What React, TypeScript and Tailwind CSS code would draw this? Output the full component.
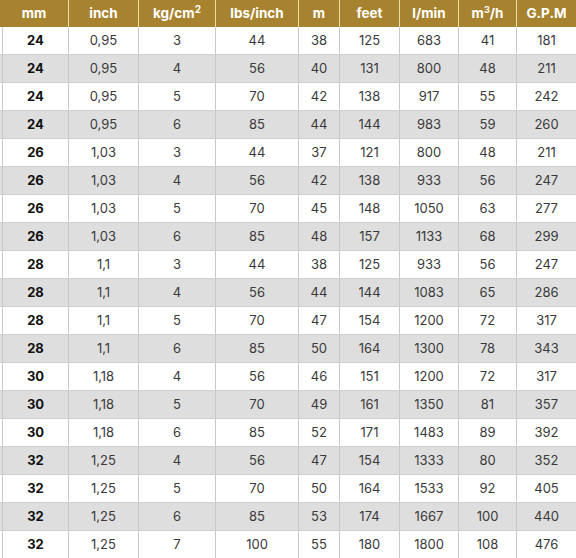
const columns = ["mm", "inch", "kg/cm²", "lbs/inch", "m", "feet", "l/min", "m³/h", "G.P.M"];

const rows: string[][] = [
  ["24", "0,95", "3", "44", "38", "125", "683", "41", "181"],
  ["24", "0,95", "4", "56", "40", "131", "800", "48", "211"],
  ["24", "0,95", "5", "70", "42", "138", "917", "55", "242"],
  ["24", "0,95", "6", "85", "44", "144", "983", "59", "260"],
  ["26", "1,03", "3", "44", "37", "121", "800", "48", "211"],
  ["26", "1,03", "4", "56", "42", "138", "933", "56", "247"],
  ["26", "1,03", "5", "70", "45", "148", "1050", "63", "277"],
  ["26", "1,03", "6", "85", "48", "157", "1133", "68", "299"],
  ["28", "1,1", "3", "44", "38", "125", "933", "56", "247"],
  ["28", "1,1", "4", "56", "44", "144", "1083", "65", "286"],
  ["28", "1,1", "5", "70", "47", "154", "1200", "72", "317"],
  ["28", "1,1", "6", "85", "50", "164", "1300", "78", "343"],
  ["30", "1,18", "4", "56", "46", "151", "1200", "72", "317"],
  ["30", "1,18", "5", "70", "49", "161", "1350", "81", "357"],
  ["30", "1,18", "6", "85", "52", "171", "1483", "89", "392"],
  ["32", "1,25", "4", "56", "47", "154", "1333", "80", "352"],
  ["32", "1,25", "5", "70", "50", "164", "1533", "92", "405"],
  ["32", "1,25", "6", "85", "53", "174", "1667", "100", "440"],
  ["32", "1,25", "7", "100", "55", "180", "1800", "108", "476"],
];

export default function App() {
  return (
    <div className="w-[576px] h-[558px] overflow-hidden bg-white font-['Inter','Liberation_Sans',sans-serif] text-[13px]">
      <div className="grid grid-cols-[68px_70px_77px_83px_41px_60px_59px_58px_60px] h-[27px] bg-[#a8832f] text-white font-bold text-[13.5px] leading-none">
        {columns.map((c, i) => (
          <div
            key={c}
            className={`flex items-center justify-center ${i > 0 ? "border-l border-[#f0dfa4]" : ""}`}
          >
            {c === "kg/cm²" ? (
              <span>
                kg/cm<span className="relative -top-[5px] text-[10px]">2</span>
              </span>
            ) : c === "m³/h" ? (
              <span>
                m<span className="relative -top-[5px] text-[9px]">3</span>/h
              </span>
            ) : (
              c
            )}
          </div>
        ))}
      </div>
      {rows.map((r, ri) => (
        <div
          key={ri}
          className={`grid grid-cols-[66px_70px_77px_83px_41px_60px_59px_58px_60px] pl-[2px] h-[28px] border-b border-[#cfcfcf] ${
            ri % 2 === 1 ? "bg-[#dedede]" : "bg-white"
          }`}
        >
          {r.map((v, ci) => (
            <div
              key={ci}
              className={`flex items-center justify-center border-l border-[#c9c9c9] ${
                ci === 0 ? "font-bold text-[#111]" : "text-[#3a3a3a]"
              }`}
            >
              {v}
            </div>
          ))}
        </div>
      ))}
    </div>
  );
}
